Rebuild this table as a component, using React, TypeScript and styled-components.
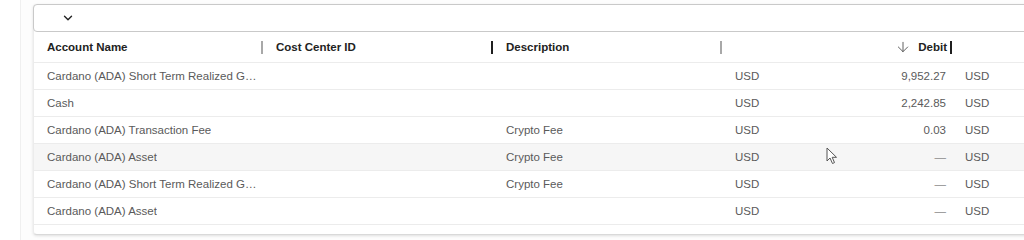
import React from "react";
import styled, { createGlobalStyle } from "styled-components";
import { ArrowDown, ChevronDown } from "lucide-react";

const GlobalStyle = createGlobalStyle`
  html, body {
    margin: 0;
    padding: 0;
    background: #ffffff;
    overflow: hidden;
  }
  body {
    font-family: "Liberation Sans", Arial, sans-serif;
  }
`;

const COLUMNS = "229px 230px 229px 230px 230px";

const Page = styled.div`
  display: flex;
  width: 1024px;
  height: 240px;
  overflow: hidden;
`;

const Rail = styled.div`
  flex: 0 0 20px;
  border-right: 1px solid #f0f0f0;
`;

const Content = styled.div`
  flex: 1;
  padding: 4px 0 0 12px;
  min-width: 0;
  background: #fdfdfd;
`;

const Card = styled.div`
  position: relative;
  width: 1200px;
  height: 231px;
  box-sizing: border-box;
  background: #ffffff;
  border-left: 1px solid #ececec;
  border-bottom: 1px solid #d9d9d9;
  border-radius: 4px 0 0 4px;
  box-shadow: 0 1px 3px rgba(0, 0, 0, 0.12);
`;

const Toolbar = styled.div`
  display: flex;
  align-items: center;
  height: 28px;
  box-sizing: border-box;
  margin-left: -1px;
  padding-left: 27px;
  border: 1px solid #c9c9c9;
  border-radius: 4px;
  color: #222;
`;

const Grid = styled.div`
  display: grid;
  grid-template-columns: ${COLUMNS};
`;

const HeaderRow = styled(Grid)`
  height: 30px;
  border-bottom: 1px solid #ececec;
`;

const HeaderCell = styled.div<{ $right?: boolean }>`
  display: flex;
  align-items: center;
  justify-content: ${(p) => (p.$right ? "flex-end" : "space-between")};
  gap: 3px;
  padding-left: 13px;
  font-size: 11.5px;
  font-weight: bold;
  color: #222;
`;

const SortIcon = styled.span`
  display: flex;
  align-items: center;
  margin-right: 4px;
  color: #555;
`;

const Divider = styled.span<{ $dark?: boolean }>`
  flex: 0 0 2px;
  height: 13px;
  background: ${(p) => (p.$dark ? "#1f1f1f" : "#a8a8a8")};
`;

const Row = styled(Grid)<{ $hover?: boolean }>`
  height: 27px;
  box-sizing: border-box;
  border-bottom: 1px solid #ececec;
  background: ${(p) => (p.$hover ? "#f6f6f6" : "#ffffff")};
`;

const Cell = styled.div<{ $truncate?: boolean }>`
  display: flex;
  align-items: center;
  padding: 0 ${(p) => (p.$truncate ? "3px" : "14px")} 0 13px;
  font-size: 11.5px;
  color: #5a5a5a;
  white-space: nowrap;
  min-width: 0;
`;

const Truncated = styled.span`
  overflow: hidden;
  text-overflow: ellipsis;
`;

const AmountCell = styled(Cell)`
  justify-content: space-between;
  padding-right: 6px;
`;

const Amount = styled.span<{ $empty?: boolean }>`
  color: ${(p) => (p.$empty ? "#8a8a8a" : "#5a5a5a")};
`;

const Pointer = styled.svg`
  position: absolute;
  left: 792px;
  top: 143px;
`;

type Line = {
  account: string;
  description?: string;
  debit?: string;
};

const lines: Line[] = [
  { account: "Cardano (ADA) Short Term Realized Gain/Loss", debit: "9,952.27" },
  { account: "Cash", debit: "2,242.85" },
  { account: "Cardano (ADA) Transaction Fee", description: "Crypto Fee", debit: "0.03" },
  { account: "Cardano (ADA) Asset", description: "Crypto Fee" },
  { account: "Cardano (ADA) Short Term Realized Gain/Loss", description: "Crypto Fee" },
  { account: "Cardano (ADA) Asset" },
];

export default function App() {
  return (
    <>
      <GlobalStyle />
      <Page>
        <Rail />
        <Content>
          <Card>
            <Toolbar>
              <ChevronDown size={14} strokeWidth={2.4} />
            </Toolbar>
            <HeaderRow>
              <HeaderCell>
                <span>Account Name</span>
                <Divider />
              </HeaderCell>
              <HeaderCell>
                <span>Cost Center ID</span>
                <Divider $dark />
              </HeaderCell>
              <HeaderCell>
                <span>Description</span>
                <Divider />
              </HeaderCell>
              <HeaderCell $right>
                <SortIcon>
                  <ArrowDown size={16} strokeWidth={1.4} />
                </SortIcon>
                <span>Debit</span>
                <Divider $dark />
              </HeaderCell>
              <HeaderCell />
            </HeaderRow>
            {lines.map((line, i) => (
              <Row key={`line-${i}`} $hover={i === 3}>
                <Cell $truncate>
                  <Truncated>{line.account}</Truncated>
                </Cell>
                <Cell />
                <Cell>{line.description}</Cell>
                <AmountCell>
                  <span>USD</span>
                  <Amount $empty={!line.debit}>{line.debit || "—"}</Amount>
                </AmountCell>
                <Cell>USD</Cell>
              </Row>
            ))}
            <Pointer width="13" height="18" viewBox="0 0 13 18">
              <path
                d="M1 1 L1 14 L4 11 L6.5 16.5 L8.5 15.6 L6.2 10.3 L10.5 10.3 Z"
                fill="#ffffff"
                stroke="#555"
                strokeWidth="1"
                strokeLinejoin="round"
              />
            </Pointer>
          </Card>
        </Content>
      </Page>
    </>
  );
}
